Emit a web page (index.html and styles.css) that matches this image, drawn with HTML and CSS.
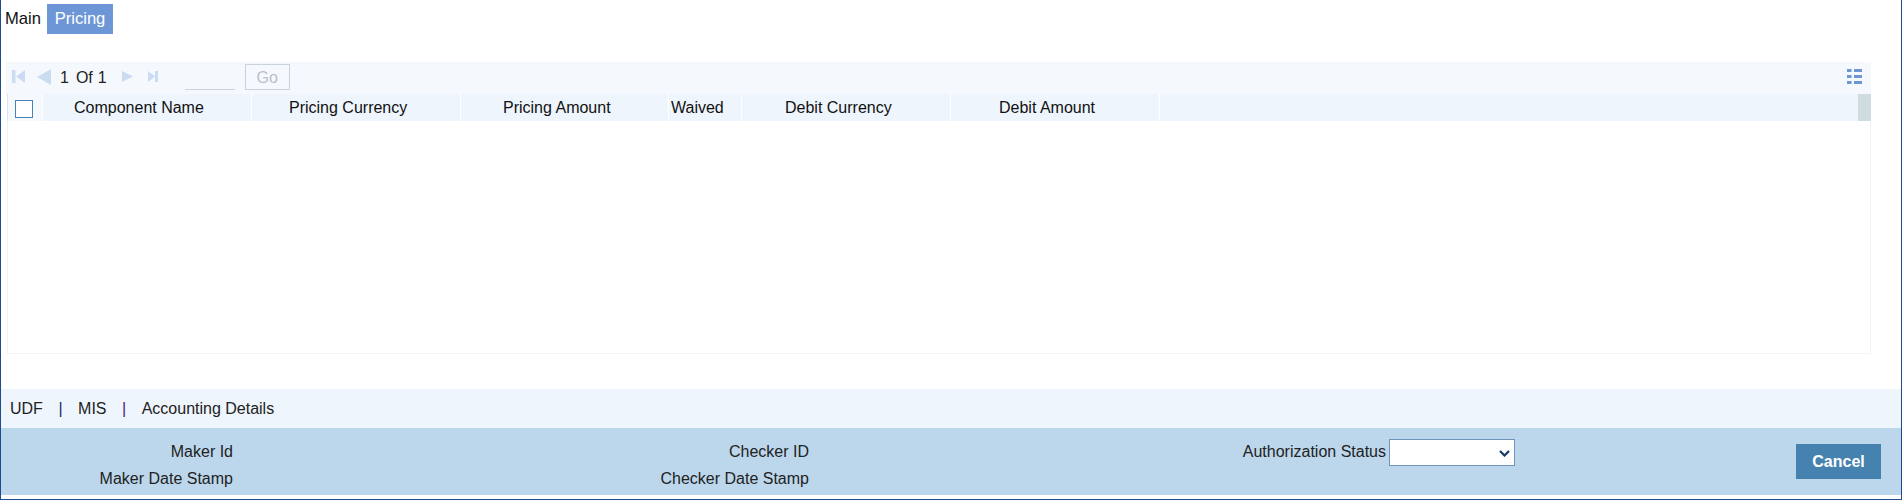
FILE: index.html
```html
<!DOCTYPE html>
<html lang="en">
<head>
<meta charset="utf-8">
<title>Pricing</title>
<link rel="stylesheet" href="styles.css">
</head>
<body>
<div class="frame">
  <nav class="tabs">
    <span class="tab tab-main">Main</span>
    <span class="tab tab-active">Pricing</span>
  </nav>
  <section class="grid-wrap">
    <div class="pager">
      <svg class="pg pg-first" viewBox="0 0 13 13" width="13" height="13"><path d="M0 0h3.500v13H0zM13 0v13L4 6.500z"/></svg>
      <svg class="pg pg-prev" viewBox="0 0 14 16" width="14" height="16"><path d="M14 0v16L0 8z"/></svg>
      <span class="pg-num">1</span>
      <span class="pg-of">Of</span>
      <span class="pg-num pg-num-last">1</span>
      <svg class="pg pg-next" viewBox="0 0 11 11" width="11" height="11"><path d="M0 0v11l11-5.500z"/></svg>
      <svg class="pg pg-last" viewBox="0 0 10 11" width="10" height="11"><path d="M0 0v11l7-5.500zM7 0h3v11H7z"/></svg>
      <span class="pg-input"></span>
      <span class="pg-go">Go</span>
      <svg class="pg-list" viewBox="0 0 15 15" width="15" height="15"><path d="M0 0h4.500v3H0zM7 0h8v3H7zM0 6h4.500v3H0zM7 6h8v3H7zM0 12h4.500v3H0zM7 12h8v3H7z"/></svg>
    </div>
    <div class="thead">
      <div class="th th-check"><span class="checkbox"></span></div>
      <div class="th th-name">Component Name</div>
      <div class="th th-pcur">Pricing Currency</div>
      <div class="th th-pamt">Pricing Amount</div>
      <div class="th th-waived">Waived</div>
      <div class="th th-dcur">Debit Currency</div>
      <div class="th th-damt">Debit Amount</div>
      <div class="th th-rest"></div>
      <div class="th-scroll"></div>
    </div>
    <div class="tbody"></div>
  </section>
  <div class="links">
    <span>UDF</span><span class="sep">|</span><span>MIS</span><span class="sep sep-visited">|</span><span>Accounting Details</span>
  </div>
  <footer class="audit">
    <div class="audit-grid">
      <span class="lbl">Maker Id</span>
      <span class="lbl">Checker ID</span>
      <span class="lbl lbl-status">Authorization Status<select class="status"><option></option></select></span>
      <span class="lbl">Maker Date Stamp</span>
      <span class="lbl">Checker Date Stamp</span>
    </div>
    <button class="cancel" type="button">Cancel</button>
  </footer>
</div>
</body>
</html>
```
FILE: styles.css
```css
* { box-sizing: border-box; }
html, body { margin: 0; padding: 0; background: #fff; }
body { font-family: "Liberation Sans", Arial, sans-serif; font-size: 16px; color: #111; }
.frame {
  width: 1902px; height: 500px;
  border-left: 1px solid #1f4b8e; border-right: 1px solid #1f4b8e; border-bottom: 1px solid #1f4b8e;
  display: flex; flex-direction: column;
  overflow: hidden;
}
.tabs { display: flex; align-items: center; height: 30px; margin-top: 4px; padding-left: 4px; font-size: 16.6px; }
.tab { height: 30px; line-height: 29px; }
.tab-main { width: 42px; }
.tab-active { background: #6c96d6; color: #fff; width: 66px; text-align: center; }
.grid-wrap { margin: 28px 30px 0 5px; display: flex; flex-direction: column; }
.pager { height: 32px; background: #f5f9fe; display: flex; align-items: center; padding-left: 6px; color: #222; }
.pg { fill: #cbdcf2; flex: none; margin-bottom: 3px; }
.pg-prev { margin-left: 12px; }
.pg-num { margin-left: 9px; }
.pg-of { margin-left: 7px; }
.pg-num-last { margin-left: 5px; }
.pg-next { margin-left: 15px; }
.pg-last { margin-left: 15px; }
.pg-input { width: 50px; height: 26px; margin-left: 27px; border-bottom: 1px solid #c9d3de; align-self: flex-start; margin-top: 2px; }
.pg-go { width: 45px; height: 26px; margin-left: 10px; border: 1px solid #c9d3de; color: #b9bfc7; text-align: center; line-height: 25px; align-self: flex-start; margin-top: 2px; }
.pg-list { margin-left: auto; margin-right: 9px; fill: #6c96d6; align-self: flex-start; margin-top: 7px; }
.thead { height: 27px; display: flex; }
.th { height: 27px; line-height: 28px; border-right: 1px solid #fff; background: #eef5fd; white-space: nowrap; flex: none; }
.th-check { width: 36px; margin-left: 1px; border-left: 1px solid #dde3ea; background: #f5f9fe; padding: 6px 0 0 7px; }
.checkbox { display: block; width: 18px; height: 18px; border: 1px solid #4a82b4; background: #fff; }
.th-name { width: 209px; padding-left: 31px; }
.th-pcur { width: 209px; padding-left: 37px; }
.th-pamt { width: 208px; padding-left: 42px; }
.th-waived { width: 73px; padding-left: 2px; }
.th-dcur { width: 209px; padding-left: 43px; }
.th-damt { width: 209px; padding-left: 48px; }
.th-rest { flex: 1; border-right: 0; }
.th-scroll { width: 13px; background: #cfdde0; }
.tbody { height: 233px; border: 1px solid #f1f3f8; border-top: 0; margin-left: 1px; }
.links {
  margin-top: 35px; height: 39px; background: #eef5fd;
  display: flex; align-items: center; padding: 1px 0 0 9px; color: #222;
}
.sep { color: #1c2a5a; margin: 0 15.5px; }
.sep-visited { color: #4b1a7e; }
.audit { height: 67px; background: #bcd7ec; display: flex; align-items: flex-start; color: #222; }
.audit-grid {
  display: grid; grid-template-columns: 232px 576px 577px; grid-auto-rows: 27px;
  padding-top: 10px;
}
.lbl { text-align: right; line-height: 27px; white-space: nowrap; }
.lbl-status { display: block; position: relative; }
.status {
  position: absolute; left: 100%; top: 1px; margin-left: 3px;
  width: 126px; height: 27px; border: 1px solid #6f93bb; border-radius: 0;
  appearance: none; -webkit-appearance: none;
  background: #fff url("data:image/svg+xml,%3Csvg xmlns='http://www.w3.org/2000/svg' width='11' height='7'%3E%3Cpath d='M1 1l4.500 4.500L10 1' fill='none' stroke='%23123a66' stroke-width='2.200'/%3E%3C/svg%3E") no-repeat 109px 10px;
  font: inherit; color: #0f3a68;
}
.cancel {
  margin: 16px 20px 0 auto; width: 85px; height: 35px; border: 0; background: #4682b0; color: #fff;
  font: bold 16px "Liberation Sans", Arial, sans-serif;
}
```
